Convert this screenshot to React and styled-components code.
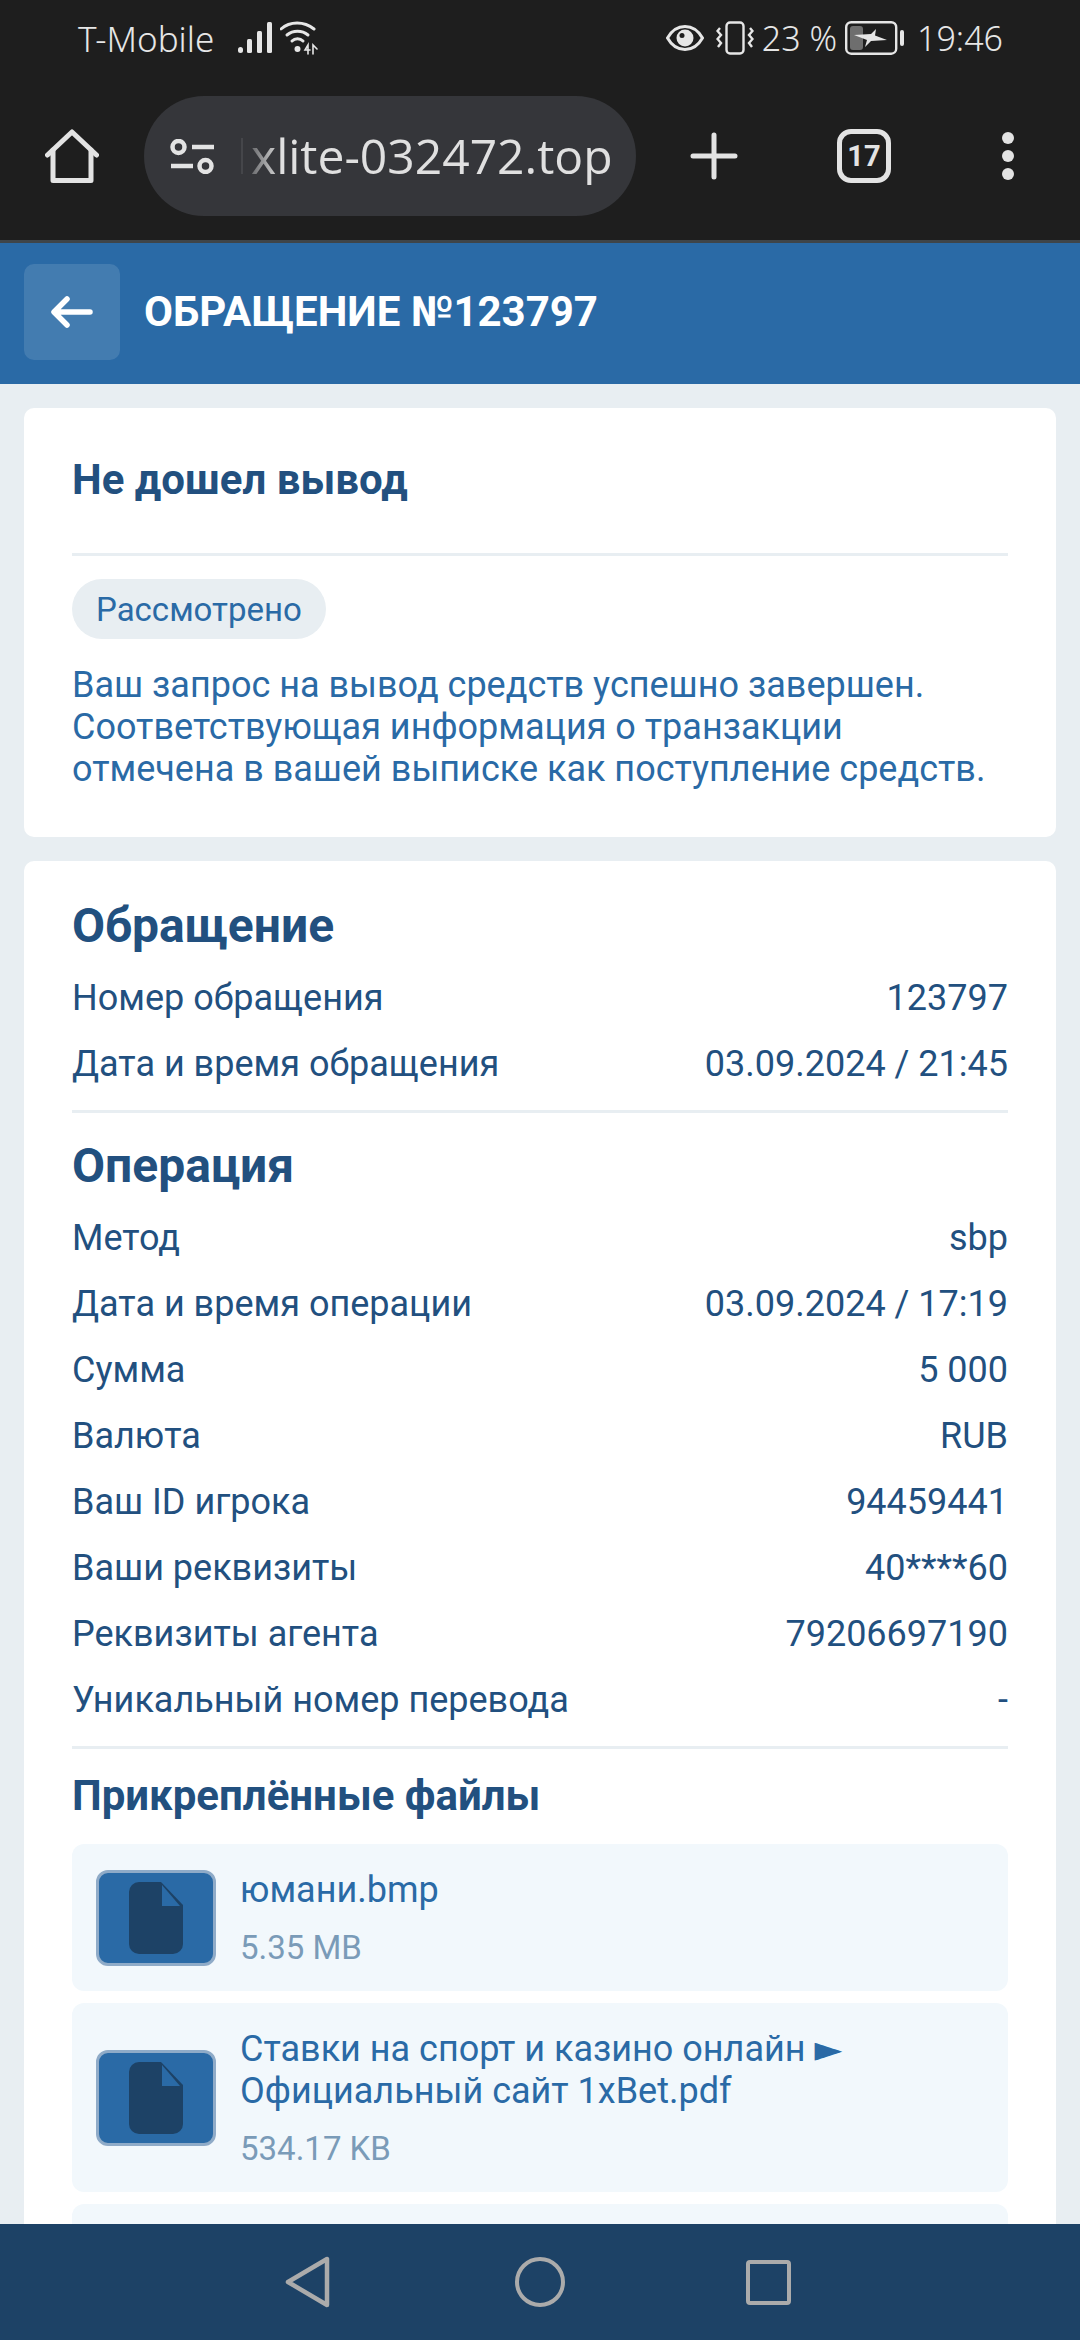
import styled, { createGlobalStyle } from 'styled-components'

const GlobalStyle = createGlobalStyle`
    html, body {
        margin: 0;
        padding: 0;
        background: #e8eef2;
    }
    * {
        box-sizing: border-box;
    }
`

const generalRows = [
    ['Номер обращения', '123797'],
    ['Дата и время обращения', '03.09.2024 / 21:45'],
]

const operationRows = [
    ['Метод', 'sbp'],
    ['Дата и время операции', '03.09.2024 / 17:19'],
    ['Сумма', '5 000'],
    ['Валюта', 'RUB'],
    ['Ваш ID игрока', '94459441'],
    ['Ваши реквизиты', '40****60'],
    ['Реквизиты агента', '79206697190'],
    ['Уникальный номер перевода', '-'],
]

const files = [
    { name: 'юмани.bmp', size: '5.35 MB' },
    { name: 'Ставки на спорт и казино онлайн ► Официальный сайт 1xBet.pdf', size: '534.17 KB' },
]

const FileIcon = () => (
    <svg width="54" height="72" viewBox="0 0 54 72">
        <path d="M10 0H32L54 23V62a10 10 0 0 1-10 10H10A10 10 0 0 1 0 62V10A10 10 0 0 1 10 0Z" fill="#1d4266" />
        <path d="M33 3L51 24H33Z" fill="#2a6aa6" />
    </svg>
)

const App = () => {
    return (
        <Screen>
            <GlobalStyle />
            <Chrome>
                <StatusBar>
                    <StatusGroup>
                        <Carrier>T-Mobile</Carrier>
                        <svg width="34" height="32" viewBox="0 0 34 32" fill="#e6e6e6">
                            <rect x="0" y="25" width="5" height="6" rx="2.5" />
                            <rect x="9" y="17" width="5" height="14" rx="1.5" />
                            <rect x="19" y="9" width="5" height="22" rx="1.5" />
                            <rect x="29" y="0" width="5" height="31" rx="1.5" />
                        </svg>
                        <svg width="38" height="34" viewBox="0 0 38 34" fill="none" stroke="#e6e6e6" strokeWidth="3" strokeLinecap="round">
                            <path d="M1 8C10 0 24 0 34 8" />
                            <path d="M7 14C13 9 22 9 28 14" />
                            <path d="M12 20C15 17 20 17 23 20" />
                            <circle cx="17.5" cy="28" r="3" fill="#e6e6e6" stroke="none" />
                            <path d="M28 33V24L25 29H30" strokeWidth="1.6" />
                            <path d="M33 33V24L37 28" strokeWidth="1.6" />
                        </svg>
                    </StatusGroup>
                    <StatusGroup>
                        <svg width="38" height="26" viewBox="0 0 38 26">
                            <path d="M1.5 13C6 5 12 1.5 19 1.5S32 5 36.500 13C32 21 26 24.500 19 24.500S6 21 1.500 13Z" fill="none" stroke="#e6e6e6" strokeWidth="3" />
                            <circle cx="19" cy="13" r="8.500" fill="#e6e6e6" />
                            <circle cx="16" cy="10.500" r="2.500" fill="#1e1e1e" />
                        </svg>
                        <VibrateIcon width="38" height="34" viewBox="0 0 38 34" fill="none" stroke="#e6e6e6" strokeWidth="2.400">
                            <rect x="10.500" y="1.500" width="17" height="31" rx="3.500" />
                            <path d="M4 7L1.500 10L5 14L1.500 18L5 22L2 26" />
                            <path d="M34 7L36.500 10L33 14L36.500 18L33 22L36 26" />
                        </VibrateIcon>
                        <StatusText>23 %</StatusText>
                        <svg width="60" height="34" viewBox="0 0 60 34">
                            <rect x="1.200" y="1.200" width="50" height="31.500" rx="5" fill="none" stroke="#e6e6e6" strokeWidth="2.400" />
                            <rect x="5" y="5" width="13" height="24" rx="3" fill="#6e6e6e" />
                            <path d="M9 14L26 13L31 8L30 14.500L42 19L26 20L20 26L22 19Z" fill="#e6e6e6" />
                            <rect x="55" y="9" width="4" height="16" rx="2" fill="#e6e6e6" />
                        </svg>
                        <Clock>19:46</Clock>
                    </StatusGroup>
                </StatusBar>
                <Toolbar>
                    <HomeIcon width="54" height="54" viewBox="0 0 54 54" fill="none" stroke="#e3e3e3" strokeWidth="5" strokeLinejoin="round" strokeLinecap="round">
                        <path d="M2.500 26L27 3L51.500 26" />
                        <path d="M8 21V51.500H46V21" />
                    </HomeIcon>
                    <UrlPill>
                        <svg width="45" height="35" viewBox="0 0 45 35" fill="none" stroke="#e3e3e3" strokeWidth="4.500">
                            <circle cx="8.500" cy="8" r="6" />
                            <path d="M22 8H44" />
                            <circle cx="35.500" cy="27" r="6" />
                            <path d="M1 27H23" />
                        </svg>
                        <UrlDivider />
                        <UrlText>xlite-032472.top</UrlText>
                    </UrlPill>
                    <PlusIcon width="48" height="48" viewBox="0 0 48 48" stroke="#e3e3e3" strokeWidth="5" strokeLinecap="round">
                        <path d="M24 3V45M3 24H45" />
                    </PlusIcon>
                    <TabsBadge>17</TabsBadge>
                    <MenuDots>
                        <Dot />
                        <Dot />
                        <Dot />
                    </MenuDots>
                </Toolbar>
            </Chrome>

            <Header>
                <BackButton>
                    <svg width="42" height="32" viewBox="0 0 42 32" fill="none" stroke="#fff" strokeWidth="5.500" strokeLinecap="round" strokeLinejoin="round">
                        <path d="M39 16H4M16 3L3 16L16 29" />
                    </svg>
                </BackButton>
                <HeaderTitle>ОБРАЩЕНИЕ №123797</HeaderTitle>
            </Header>

            <Main>
                <Card>
                    <TicketTitle>Не дошел вывод</TicketTitle>
                    <Divider />
                    <StatusPill>Рассмотрено</StatusPill>
                    <Description>
                        Ваш запрос на вывод средств успешно завершен.<br />
                        Соответствующая информация о транзакции<br />
                        отмечена в вашей выписке как поступление средств.
                    </Description>
                </Card>

                <DetailsCard>
                    <SectionTitle>Обращение</SectionTitle>
                    {generalRows.map(([label, value]) => (
                        <Row key={label}>
                            <span>{label}</span>
                            <span>{value}</span>
                        </Row>
                    ))}
                    <SectionDivider />
                    <SectionTitle>Операция</SectionTitle>
                    {operationRows.map(([label, value]) => (
                        <Row key={label}>
                            <span>{label}</span>
                            <span>{value}</span>
                        </Row>
                    ))}
                    <SectionDivider />
                    <FilesTitle>Прикреплённые файлы</FilesTitle>
                    <FileList>
                        {files.map((file) => (
                            <FileItem key={file.name}>
                                <FileThumb>
                                    <FileIcon />
                                </FileThumb>
                                <FileInfo>
                                    <FileName>{file.name}</FileName>
                                    <FileSize>{file.size}</FileSize>
                                </FileInfo>
                            </FileItem>
                        ))}
                        <FileStub />
                    </FileList>
                </DetailsCard>
            </Main>

            <NavBar>
                <svg width="46" height="52" viewBox="0 0 46 52" fill="none" stroke="#ababab" strokeWidth="4.500" strokeLinejoin="round">
                    <path d="M42 3V49L3 26Z" />
                </svg>
                <NavCircle />
                <NavSquare />
            </NavBar>
        </Screen>
    )
}

const Screen = styled.div`
    width: 1080px;
    height: 2340px;
    display: flex;
    flex-direction: column;
    overflow: hidden;
    background: #e8eef2;
    font-family: Roboto, "Liberation Sans", sans-serif;
`

const Chrome = styled.div`
    height: 243px;
    flex: none;
    background: #1e1e1e;
    border-bottom: 3px solid #3f4549;
`

const StatusBar = styled.div`
    height: 76px;
    padding: 0 77px 0 78px;
    display: flex;
    justify-content: space-between;
    align-items: center;
    color: #e6e6e6;
    font-family: "Noto Sans", sans-serif;
    font-size: 34px;
`

const StatusGroup = styled.div`
    display: flex;
    align-items: center;
    gap: 8px;
`

const Carrier = styled.span`
    margin-right: 16px;
    font-size: 35px;
    font-weight: 300;
`

const VibrateIcon = styled.svg`
    margin-left: 4px;
`

const StatusText = styled.span`
    font-weight: 300;
    white-space: pre;
`

const Clock = styled.span`
    margin-left: 4px;
    font-weight: 300;
`

const Toolbar = styled.div`
    height: 164px;
    padding: 20px 0 24px 45px;
    display: flex;
    align-items: center;
`

const HomeIcon = styled.svg`
    flex: none;
`

const UrlPill = styled.div`
    width: 492px;
    height: 120px;
    margin-left: 45px;
    padding-left: 26px;
    flex: none;
    display: flex;
    align-items: center;
    border-radius: 60px;
    background: #35363a;
    overflow: hidden;
`

const UrlDivider = styled.div`
    width: 2px;
    height: 36px;
    margin: 0 8px 0 26px;
    flex: none;
    background: #45464a;
`

const UrlText = styled.span`
    margin-bottom: 2px;
    color: #e0e0e0;
    font-family: "Open Sans", sans-serif;
    font-size: 48px;
    white-space: nowrap;
    mask-image: linear-gradient(90deg, rgba(0, 0, 0, 0.3) 0, #000 30px);
`

const PlusIcon = styled.svg`
    margin-left: 54px;
    flex: none;
`

const TabsBadge = styled.div`
    width: 54px;
    height: 54px;
    margin-left: 99px;
    flex: none;
    display: flex;
    align-items: center;
    justify-content: center;
    border: 5px solid #e3e3e3;
    border-radius: 14px;
    color: #e3e3e3;
    font-size: 29px;
    font-weight: 700;
`

const MenuDots = styled.div`
    margin-left: 111px;
    display: flex;
    flex-direction: column;
    gap: 6px;
`

const Dot = styled.div`
    width: 12px;
    height: 12px;
    border-radius: 50%;
    background: #e3e3e3;
`

const Header = styled.header`
    height: 141px;
    padding: 21px 24px 24px;
    flex: none;
    display: flex;
    align-items: center;
    gap: 24px;
    background: #2a6aa6;
`

const BackButton = styled.div`
    width: 96px;
    height: 96px;
    display: flex;
    align-items: center;
    justify-content: center;
    border-radius: 10px;
    background: rgba(255, 255, 255, 0.12);
`

const HeaderTitle = styled.h1`
    margin: 0 0 2px;
    color: #fff;
    font-size: 42px;
    font-weight: 700;
`

const Main = styled.main`
    flex: 1;
    min-height: 0;
    padding: 24px 24px 0;
    display: flex;
    flex-direction: column;
    gap: 24px;
    overflow: hidden;
`

const Card = styled.section`
    padding: 48px 48px 47px;
    flex: none;
    border-radius: 10px;
    background: #fff;
`

const TicketTitle = styled.h2`
    margin: 0;
    color: #22507f;
    font-size: 42px;
    font-weight: 700;
    line-height: 48px;
`

const Divider = styled.hr`
    height: 3px;
    margin: 49px 0 23px;
    border: 0;
    background: #e8eef2;
`

const StatusPill = styled.div`
    width: fit-content;
    height: 60px;
    padding: 0 24px;
    display: flex;
    align-items: center;
    border-radius: 30px;
    background: #e8eef2;
    color: #2a6aa6;
    font-size: 33px;
`

const Description = styled.p`
    margin: 25px 0 0;
    color: #2a6aa6;
    font-size: 36px;
    line-height: 42px;
`

const DetailsCard = styled.section`
    padding: 33px 48px 0;
    flex: none;
    border-radius: 10px 10px 0 0;
    background: #fff;
`

const SectionTitle = styled.h3`
    margin: 0 0 7px;
    color: #22507f;
    font-size: 48px;
    font-weight: 700;
    line-height: 64px;
`

const Row = styled.div`
    height: 66px;
    display: flex;
    justify-content: space-between;
    align-items: center;
    color: #22507f;
    font-size: 36px;
`

const SectionDivider = styled.hr`
    height: 3px;
    margin: 13px 0 21px;
    border: 0;
    background: #e8eef2;
`

const FilesTitle = styled.h3`
    margin: 0 0 22px;
    color: #22507f;
    font-size: 42px;
    font-weight: 700;
    line-height: 52px;
`

const FileList = styled.div`
    display: flex;
    flex-direction: column;
    gap: 12px;
`

const FileItem = styled.div`
    padding: 25px 24px 24px;
    display: flex;
    align-items: center;
    gap: 24px;
    border-radius: 12px;
    background: #f2f8fc;
`

const FileStub = styled(FileItem)`
    height: 147px;
`

const FileThumb = styled.div`
    width: 120px;
    height: 96px;
    flex: none;
    display: flex;
    align-items: center;
    justify-content: center;
    border: 3px solid #8fabc8;
    border-radius: 12px;
    background: #2a6aa6;
`

const FileInfo = styled.div`
    min-width: 0;
    display: flex;
    flex-direction: column;
    gap: 18px;
`

const FileName = styled.div`
    color: #2a6aa6;
    font-family: Roboto, "DejaVu Sans", sans-serif;
    font-size: 36px;
    line-height: 42px;
`

const FileSize = styled.div`
    color: #7a9bb8;
    font-size: 33px;
    line-height: 38px;
`

const NavBar = styled.nav`
    height: 116px;
    padding-left: 285px;
    flex: none;
    display: flex;
    align-items: center;
    background: #1d4266;
`

const NavCircle = styled.div`
    width: 50px;
    height: 50px;
    margin-left: 184px;
    border: 4.5px solid #ababab;
    border-radius: 50%;
`

const NavSquare = styled.div`
    width: 45px;
    height: 45px;
    margin-left: 181px;
    border: 4.5px solid #ababab;
    border-radius: 4px;
`

export default App
